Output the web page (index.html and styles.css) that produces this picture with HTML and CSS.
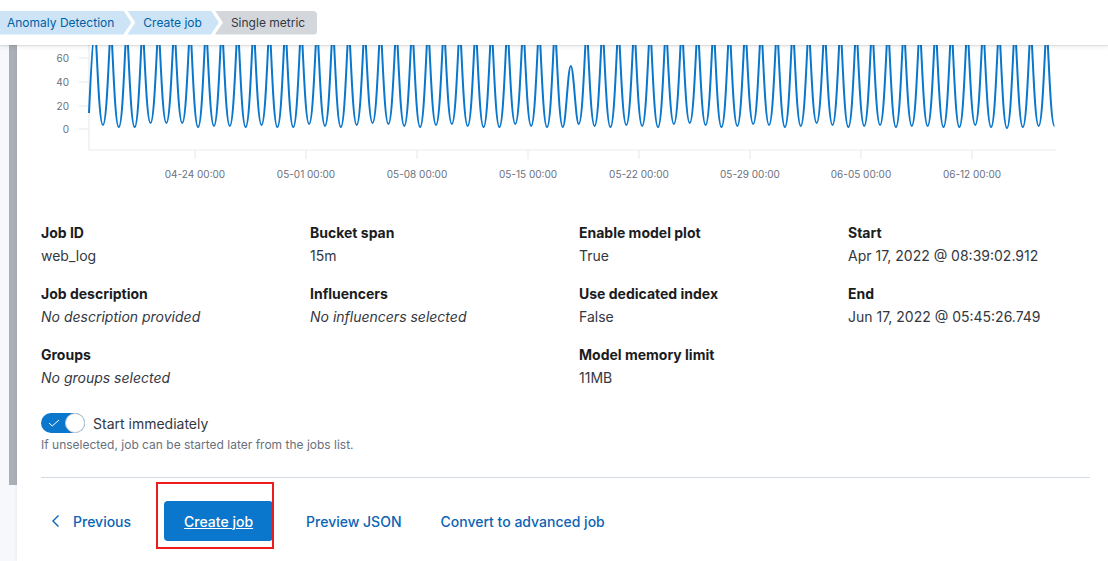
FILE: index.html
```html
<!DOCTYPE html>
<html lang="en">
<head>
<meta charset="utf-8">
<title>Single metric job</title>
<link rel="stylesheet" href="styles.css">
</head>
<body>
<header class="topbar">
  <nav class="crumbs">
    <a class="crumb crumb-first">Anomaly Detection</a>
    <a class="crumb crumb-mid">Create job</a>
    <span class="crumb crumb-last">Single metric</span>
  </nav>
</header>
<div class="page">
  <div class="rail"><div class="rail-bar"></div></div>
  <main class="panel">
    <svg class="chart" viewBox="17 45 1091 140" width="1091" height="140">
      <g class="axis">
        <line x1="89" y1="40" x2="89" y2="150"/>
        <line x1="89" y1="150" x2="1056" y2="150"/>
        <line x1="79" y1="58" x2="89" y2="58"/>
        <line x1="79" y1="82" x2="89" y2="82"/>
        <line x1="79" y1="106" x2="89" y2="106"/>
        <line x1="79" y1="129" x2="89" y2="129"/>
        <line x1="195" y1="150" x2="195" y2="159"/>
        <line x1="306" y1="150" x2="306" y2="159"/>
        <line x1="417" y1="150" x2="417" y2="159"/>
        <line x1="528" y1="150" x2="528" y2="159"/>
        <line x1="639" y1="150" x2="639" y2="159"/>
        <line x1="750" y1="150" x2="750" y2="159"/>
        <line x1="861" y1="150" x2="861" y2="159"/>
        <line x1="972" y1="150" x2="972" y2="159"/>
      </g>
      <g class="ylabels">
        <text x="69" y="61.5">60</text>
        <text x="69" y="85.5">40</text>
        <text x="69" y="109.5">20</text>
        <text x="69" y="132.5">0</text>
      </g>
      <g class="xlabels">
        <text x="195" y="177.5">04-24 00:00</text>
        <text x="306" y="177.5">05-01 00:00</text>
        <text x="417" y="177.5">05-08 00:00</text>
        <text x="528" y="177.5">05-15 00:00</text>
        <text x="639" y="177.5">05-22 00:00</text>
        <text x="750" y="177.5">05-29 00:00</text>
        <text x="861" y="177.5">06-05 00:00</text>
        <text x="972" y="177.5">06-12 00:00</text>
      </g>
      <path class="series" d="M89,113 C90.5,80 93,30 95,30
c1.5,0 3.5,95 7.93,95c4.43,0 6.43,-95 7.93,-95
c1.5,0 3.5,97 7.93,97c4.43,0 6.43,-97 7.93,-97
c1.5,0 3.5,97 7.93,97c4.43,0 6.43,-97 7.93,-97
c1.5,0 3.5,93 7.93,93c4.43,0 6.43,-93 7.93,-93
c1.5,0 3.5,93 7.93,93c4.43,0 6.43,-93 7.93,-93
c1.5,0 3.5,93 7.93,93c4.43,0 6.43,-93 7.93,-93
c1.5,0 3.5,97 7.93,97c4.43,0 6.43,-97 7.93,-97
c1.5,0 3.5,96 7.93,96c4.43,0 6.43,-96 7.93,-96
c1.5,0 3.5,96 7.93,96c4.43,0 6.43,-96 7.93,-96
c1.5,0 3.5,97 7.93,97c4.43,0 6.43,-97 7.93,-97
c1.5,0 3.5,95 7.93,95c4.43,0 6.43,-95 7.93,-95
c1.5,0 3.5,97 7.93,97c4.43,0 6.43,-97 7.93,-97
c1.5,0 3.5,97 7.93,97c4.43,0 6.43,-97 7.93,-97
c1.5,0 3.5,94 7.93,94c4.43,0 6.43,-94 7.93,-94
c1.5,0 3.5,96 7.93,96c4.43,0 6.43,-96 7.93,-96
c1.5,0 3.5,97 7.93,97c4.43,0 6.43,-97 7.93,-97
c1.5,0 3.5,95 7.93,95c4.43,0 6.43,-95 7.93,-95
c1.5,0 3.5,93 7.93,93c4.43,0 6.43,-93 7.93,-93
c1.5,0 3.5,94 7.93,94c4.43,0 6.43,-94 7.93,-94
c1.5,0 3.5,96 7.93,96c4.43,0 6.43,-96 7.93,-96
c1.5,0 3.5,97 7.93,97c4.43,0 6.43,-97 7.93,-97
c1.5,0 3.5,95 7.93,95c4.43,0 6.43,-95 7.93,-95
c1.5,0 3.5,94 7.93,94c4.43,0 6.43,-94 7.93,-94
c1.5,0 3.5,96 7.93,96c4.43,0 6.43,-96 7.93,-96
c1.5,0 3.5,97 7.93,97c4.43,0 6.43,-97 7.93,-97
c1.5,0 3.5,97 7.93,97c4.43,0 6.43,-97 7.93,-97
c1.5,0 3.5,94 7.93,94c4.43,0 6.43,-94 7.93,-94
c1.5,0 3.5,96 7.93,96c4.43,0 6.43,-96 7.93,-96
c1.5,0 3.5,97 7.93,97c4.43,0 6.43,-97 7.93,-97
c1.5,0 3.5,97 7.93,97c3,0 5,-61 7.93,-61
c2.93,0 4.93,58 7.93,58c4.43,0 6.43,-94 7.93,-94
c1.5,0 3.5,96 7.93,96c4.43,0 6.43,-96 7.93,-96
c1.5,0 3.5,97 7.93,97c4.43,0 6.43,-97 7.93,-97
c1.5,0 3.5,95 7.93,95c4.43,0 6.43,-95 7.93,-95
c1.5,0 3.5,96 7.93,96c4.43,0 6.43,-96 7.93,-96
c1.5,0 3.5,97 7.93,97c4.43,0 6.43,-97 7.93,-97
c1.5,0 3.5,94 7.93,94c4.43,0 6.43,-94 7.93,-94
c1.5,0 3.5,93 7.93,93c4.43,0 6.43,-93 7.93,-93
c1.5,0 3.5,95 7.93,95c4.43,0 6.43,-95 7.93,-95
c1.5,0 3.5,97 7.93,97c4.43,0 6.43,-97 7.93,-97
c1.5,0 3.5,96 7.93,96c4.43,0 6.43,-96 7.93,-96
c1.5,0 3.5,94 7.93,94c4.43,0 6.43,-94 7.93,-94
c1.5,0 3.5,95 7.93,95c4.43,0 6.43,-95 7.93,-95
c1.5,0 3.5,97 7.93,97c4.43,0 6.43,-97 7.93,-97
c1.5,0 3.5,96 7.93,96c4.43,0 6.43,-96 7.93,-96
c1.5,0 3.5,93 7.93,93c4.43,0 6.43,-93 7.93,-93
c1.5,0 3.5,95 7.93,95c4.43,0 6.43,-95 7.93,-95
c1.5,0 3.5,97 7.93,97c4.43,0 6.43,-97 7.93,-97
c1.5,0 3.5,96 7.93,96c4.43,0 6.43,-96 7.93,-96
c1.5,0 3.5,95 7.93,95c4.43,0 6.43,-95 7.93,-95
c1.5,0 3.5,97 7.93,97c4.43,0 6.43,-97 7.93,-97
c1.5,0 3.5,96 7.93,96c4.43,0 6.43,-96 7.93,-96
c1.5,0 3.5,96 7.93,96c4.43,0 6.43,-96 7.93,-96
c1.5,0 3.5,97 7.93,97c4.43,0 6.43,-97 7.93,-97
c1.5,0 3.5,97 7.93,97c4.43,0 6.43,-97 7.93,-97
c1.5,0 3.5,95 7.93,95c4.43,0 6.43,-95 7.93,-95
c1.5,0 3.5,97 7.93,97c4.43,0 6.43,-97 7.93,-97
c1.5,0 3.5,98 7.93,98c4.43,0 6.43,-98 7.93,-98
c1.5,0 3.5,97 7.93,97c4.43,0 6.43,-97 7.93,-97
c1.5,0 3.5,96 7.93,96c4.43,0 6.43,-96 7.93,-96
c1.5,0 3.5,96 7.93,96"/>
    </svg>
    <div class="content">
      <dl class="summary">
        <div class="field"><dt>Job ID</dt><dd>web_log</dd></div>
        <div class="field"><dt>Bucket span</dt><dd>15m</dd></div>
        <div class="field"><dt>Enable model plot</dt><dd>True</dd></div>
        <div class="field"><dt>Start</dt><dd>Apr 17, 2022 @ 08:39:02.912</dd></div>
        <div class="field"><dt>Job description</dt><dd class="empty">No description provided</dd></div>
        <div class="field"><dt>Influencers</dt><dd class="empty">No influencers selected</dd></div>
        <div class="field"><dt>Use dedicated index</dt><dd>False</dd></div>
        <div class="field"><dt>End</dt><dd>Jun 17, 2022 @ 05:45:26.749</dd></div>
        <div class="field"><dt>Groups</dt><dd class="empty">No groups selected</dd></div>
        <div class="field"></div>
        <div class="field"><dt>Model memory limit</dt><dd>11MB</dd></div>
        <div class="field"></div>
      </dl>

      <div class="switch-row">
        <span class="switch" role="switch" aria-checked="true">
          <svg class="switch-check" width="12" height="8" viewBox="0 0 12 8"><path d="M1 4 L4.2 7 L11 1" fill="none" stroke="#fff" stroke-width="1"/></svg>
          <span class="switch-thumb"></span>
        </span>
        <span class="switch-label">Start immediately</span>
      </div>
      <p class="help">If unselected, job can be started later from the jobs list.</p>

      <hr class="rule">

      <div class="actions">
        <a class="link-btn prev">
          <svg width="16" height="16" viewBox="0 0 16 16"><path d="M10.5 2.5 L5 8 L10.5 13.5" fill="none" stroke="#0b64b4" stroke-width="1.4"/></svg>
          <span>Previous</span>
        </a>
        <div class="create-wrap">
          <a class="primary-btn">Create job</a>
          <span class="highlight"></span>
        </div>
        <a class="link-btn preview">Preview JSON</a>
        <a class="link-btn convert">Convert to advanced job</a>
      </div>
    </div>
  </main>
</div>
</body>
</html>
```
FILE: styles.css
```css
* { box-sizing: border-box; }

html, body {
  margin: 0;
  padding: 0;
  height: 100%;
  overflow: hidden;
}

body {
  font-family: Inter, "Noto Sans", "Liberation Sans", sans-serif;
  background: #f7f8fc;
  color: #343741;
}

.topbar {
  position: relative;
  z-index: 2;
  height: 45px;
  background: #fff;
  box-shadow: 0 1px 1px rgba(0, 0, 0, 0.08), 0 2px 5px rgba(0, 0, 0, 0.07);
  display: flex;
  align-items: center;
}

.crumbs {
  display: flex;
  align-items: center;
}

.crumb {
  height: 24px;
  display: flex;
  align-items: center;
  font-size: 12px;
  line-height: 24px;
  white-space: nowrap;
  clip-path: polygon(0 0, calc(100% - 8px) 0, 100% 50%, calc(100% - 8px) 100%, 0 100%, 8px 50%);
}

.crumb-first {
  background: #cce4f5;
  color: #0061a6;
  padding: 0 17px 0 7px;
  clip-path: polygon(0 0, calc(100% - 8px) 0, 100% 50%, calc(100% - 8px) 100%, 0 100%);
}

.crumb-mid {
  background: #cce4f5;
  color: #0061a6;
  padding: 0 17px 0 16px;
  margin-left: -4px;
}

.crumb-last {
  background: #d3d7dc;
  color: #343741;
  padding: 0 12px 0 16px;
  margin-left: -4px;
  border-radius: 0 4px 4px 0;
  clip-path: polygon(0 0, 100% 0, 100% 100%, 0 100%, 8px 50%);
}

.page {
  display: flex;
  height: calc(100% - 45px);
}

.rail {
  width: 17px;
  flex: none;
  padding-left: 9px;
}

.rail-bar {
  width: 8px;
  height: 440px;
  background: #abb0b8;
}

.panel {
  flex: 1;
  background: #fff;
  box-shadow: -1px 0 3px rgba(0, 0, 0, 0.05);
  min-width: 0;
}

.chart {
  display: block;
}

.chart .axis line {
  stroke: #e9ebef;
  stroke-width: 1.2;
}

.chart text {
  font-family: Inter, "Liberation Sans", sans-serif;
  font-size: 10px;
  fill: #6a717d;
}

.chart .ylabels text { text-anchor: end; }
.chart .xlabels text { text-anchor: middle; }

.chart .series {
  fill: none;
  stroke: #0a77cc;
  stroke-width: 2;
  stroke-linejoin: round;
}

.content {
  padding: 0 18px 0 24px;
}

.summary {
  margin: 36px 0 0;
  display: grid;
  grid-template-columns: 269px 269px 269px 269px;
  row-gap: 15px;
}

.field dt {
  font-size: 14px;
  line-height: 23px;
  font-weight: 700;
  color: #1a1c21;
}

.field dd {
  margin: 0;
  font-size: 14px;
  line-height: 23px;
  color: #343741;
}

.field dd.empty {
  font-style: italic;
}

.switch-row {
  display: flex;
  align-items: center;
  margin-top: 24px;
  height: 20px;
}

.switch {
  width: 44px;
  height: 20px;
  border-radius: 10px;
  background: #0b77cc;
  display: flex;
  align-items: center;
  justify-content: space-between;
  padding-left: 7px;
}

.switch-check { display: block; }

.switch-thumb {
  width: 20px;
  height: 20px;
  border-radius: 50%;
  background: #fff;
  border: 1px solid #c7cdd6;
}

.switch-label {
  margin-left: 8px;
  font-size: 14px;
  color: #343741;
}

.help {
  margin: 4px 0 0;
  font-size: 12px;
  line-height: 16px;
  color: #69707d;
}

.rule {
  margin: 24px 0 0;
  border: 0;
  border-top: 1px solid #d3dae6;
}

.actions {
  display: flex;
  align-items: center;
  margin-top: 23px;
  height: 40px;
}

.link-btn {
  font-size: 14px;
  font-weight: 500;
  color: #0b64b4;
  white-space: nowrap;
  display: flex;
  align-items: center;
}

.prev {
  margin-left: 7px;
}

.prev svg { margin-right: 9px; }

.create-wrap {
  position: relative;
  margin-left: 33px;
}

.primary-btn {
  display: flex;
  align-items: center;
  justify-content: center;
  width: 109px;
  height: 40px;
  border-radius: 4px;
  background: #0b77cc;
  color: #fff;
  font-size: 14px;
  font-weight: 500;
  text-decoration: underline;
}

.highlight {
  position: absolute;
  left: -8px;
  top: -19px;
  width: 118px;
  height: 67px;
  border: 2px solid #ee1c1c;
  pointer-events: none;
}

.preview { margin-left: 33px; }
.convert { margin-left: 39px; }
```
